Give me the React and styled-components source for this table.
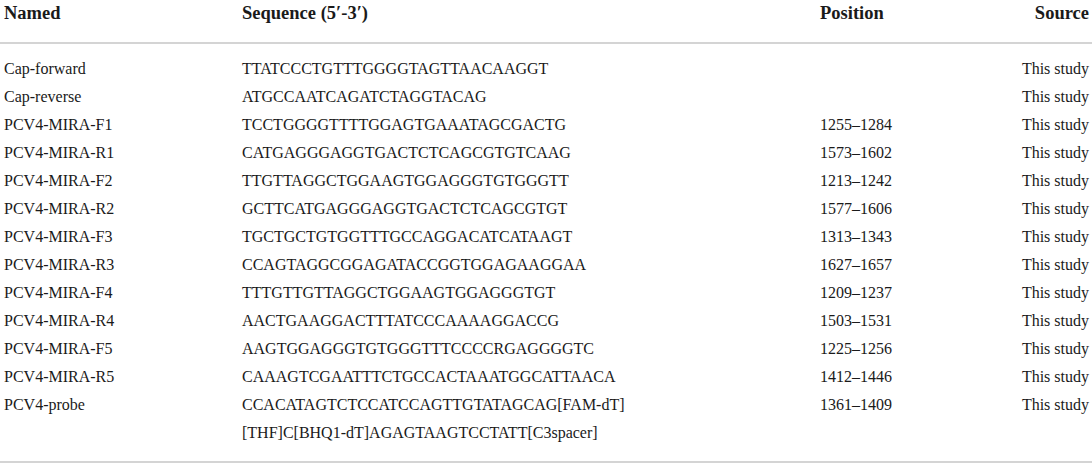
import React from 'react'
import styled, { createGlobalStyle } from 'styled-components'

const rows = [
  ['Cap-forward', ['TTATCCCTGTTTGGGGTAGTTAACAAGGT'], ''],
  ['Cap-reverse', ['ATGCCAATCAGATCTAGGTACAG'], ''],
  ['PCV4-MIRA-F1', ['TCCTGGGGTTTTGGAGTGAAATAGCGACTG'], '1255–1284'],
  ['PCV4-MIRA-R1', ['CATGAGGGAGGTGACTCTCAGCGTGTCAAG'], '1573–1602'],
  ['PCV4-MIRA-F2', ['TTGTTAGGCTGGAAGTGGAGGGTGTGGGTT'], '1213–1242'],
  ['PCV4-MIRA-R2', ['GCTTCATGAGGGAGGTGACTCTCAGCGTGT'], '1577–1606'],
  ['PCV4-MIRA-F3', ['TGCTGCTGTGGTTTGCCAGGACATCATAAGT'], '1313–1343'],
  ['PCV4-MIRA-R3', ['CCAGTAGGCGGAGATACCGGTGGAGAAGGAA'], '1627–1657'],
  ['PCV4-MIRA-F4', ['TTTGTTGTTAGGCTGGAAGTGGAGGGTGT'], '1209–1237'],
  ['PCV4-MIRA-R4', ['AACTGAAGGACTTTATCCCAAAAGGACCG'], '1503–1531'],
  ['PCV4-MIRA-F5', ['AAGTGGAGGGTGTGGGTTTCCCCRGAGGGGTC'], '1225–1256'],
  ['PCV4-MIRA-R5', ['CAAAGTCGAATTTCTGCCACTAAATGGCATTAACA'], '1412–1446'],
  ['PCV4-probe', ['CCACATAGTCTCCATCCAGTTGTATAGCAG[FAM-dT]', '[THF]C[BHQ1-dT]AGAGTAAGTCCTATT[C3spacer]'], '1361–1409'],
]

const GlobalStyle = createGlobalStyle`
  body {
    margin: 0;
    background: #fff;
    font-family: "Liberation Serif", "Times New Roman", serif;
    color: #1a1a1a;
  }
`

const App = () => {
  return (
    <>
      <GlobalStyle />
      <Table>
        <colgroup>
          <col style={{ width: 238 }} />
          <col style={{ width: 578 }} />
          <col style={{ width: 200 }} />
          <col />
        </colgroup>
        <thead>
          <tr>
            <Th>Named</Th>
            <Th>Sequence (5′-3′)</Th>
            <Th>Position</Th>
            <Th $right>Source</Th>
          </tr>
        </thead>
        <Body>
          {rows.map(([name, seq, pos], i) => (
            <Row key={name} $first={i === 0} $last={i === rows.length - 1}>
              <Td>{name}</Td>
              <Td>
                {seq.map((line) => (
                  <SeqLine key={line}>{line}</SeqLine>
                ))}
              </Td>
              <Td>{pos}</Td>
              <Td $right>This study</Td>
            </Row>
          ))}
        </Body>
      </Table>
    </>
  )
}

const Table = styled.table`
  width: 1092px;
  border-collapse: collapse;
  table-layout: fixed;
  font-size: 16px;
`

const Th = styled.th`
  font-weight: bold;
  font-size: 18.5px;
  text-align: ${(p) => (p.$right ? 'right' : 'left')};
  padding: 0 3px 16px 4px;
  height: 26px;
  vertical-align: top;
  line-height: 26px;
  border-bottom: 2px solid #d4d4d4;
`

const Body = styled.tbody`
  border-bottom: 2px solid #d4d4d4;
`

const Row = styled.tr`
  td {
    padding-top: ${(p) => (p.$first ? '11px' : '0')};
    padding-bottom: ${(p) => (p.$last ? '14px' : '0')};
  }
`

const Td = styled.td`
  vertical-align: top;
  line-height: 28px;
  padding-left: 4px;
  padding-right: 3px;
  text-align: ${(p) => (p.$right ? 'right' : 'left')};
  white-space: nowrap;
`

const SeqLine = styled.div`
  line-height: 28px;
`

export default App
